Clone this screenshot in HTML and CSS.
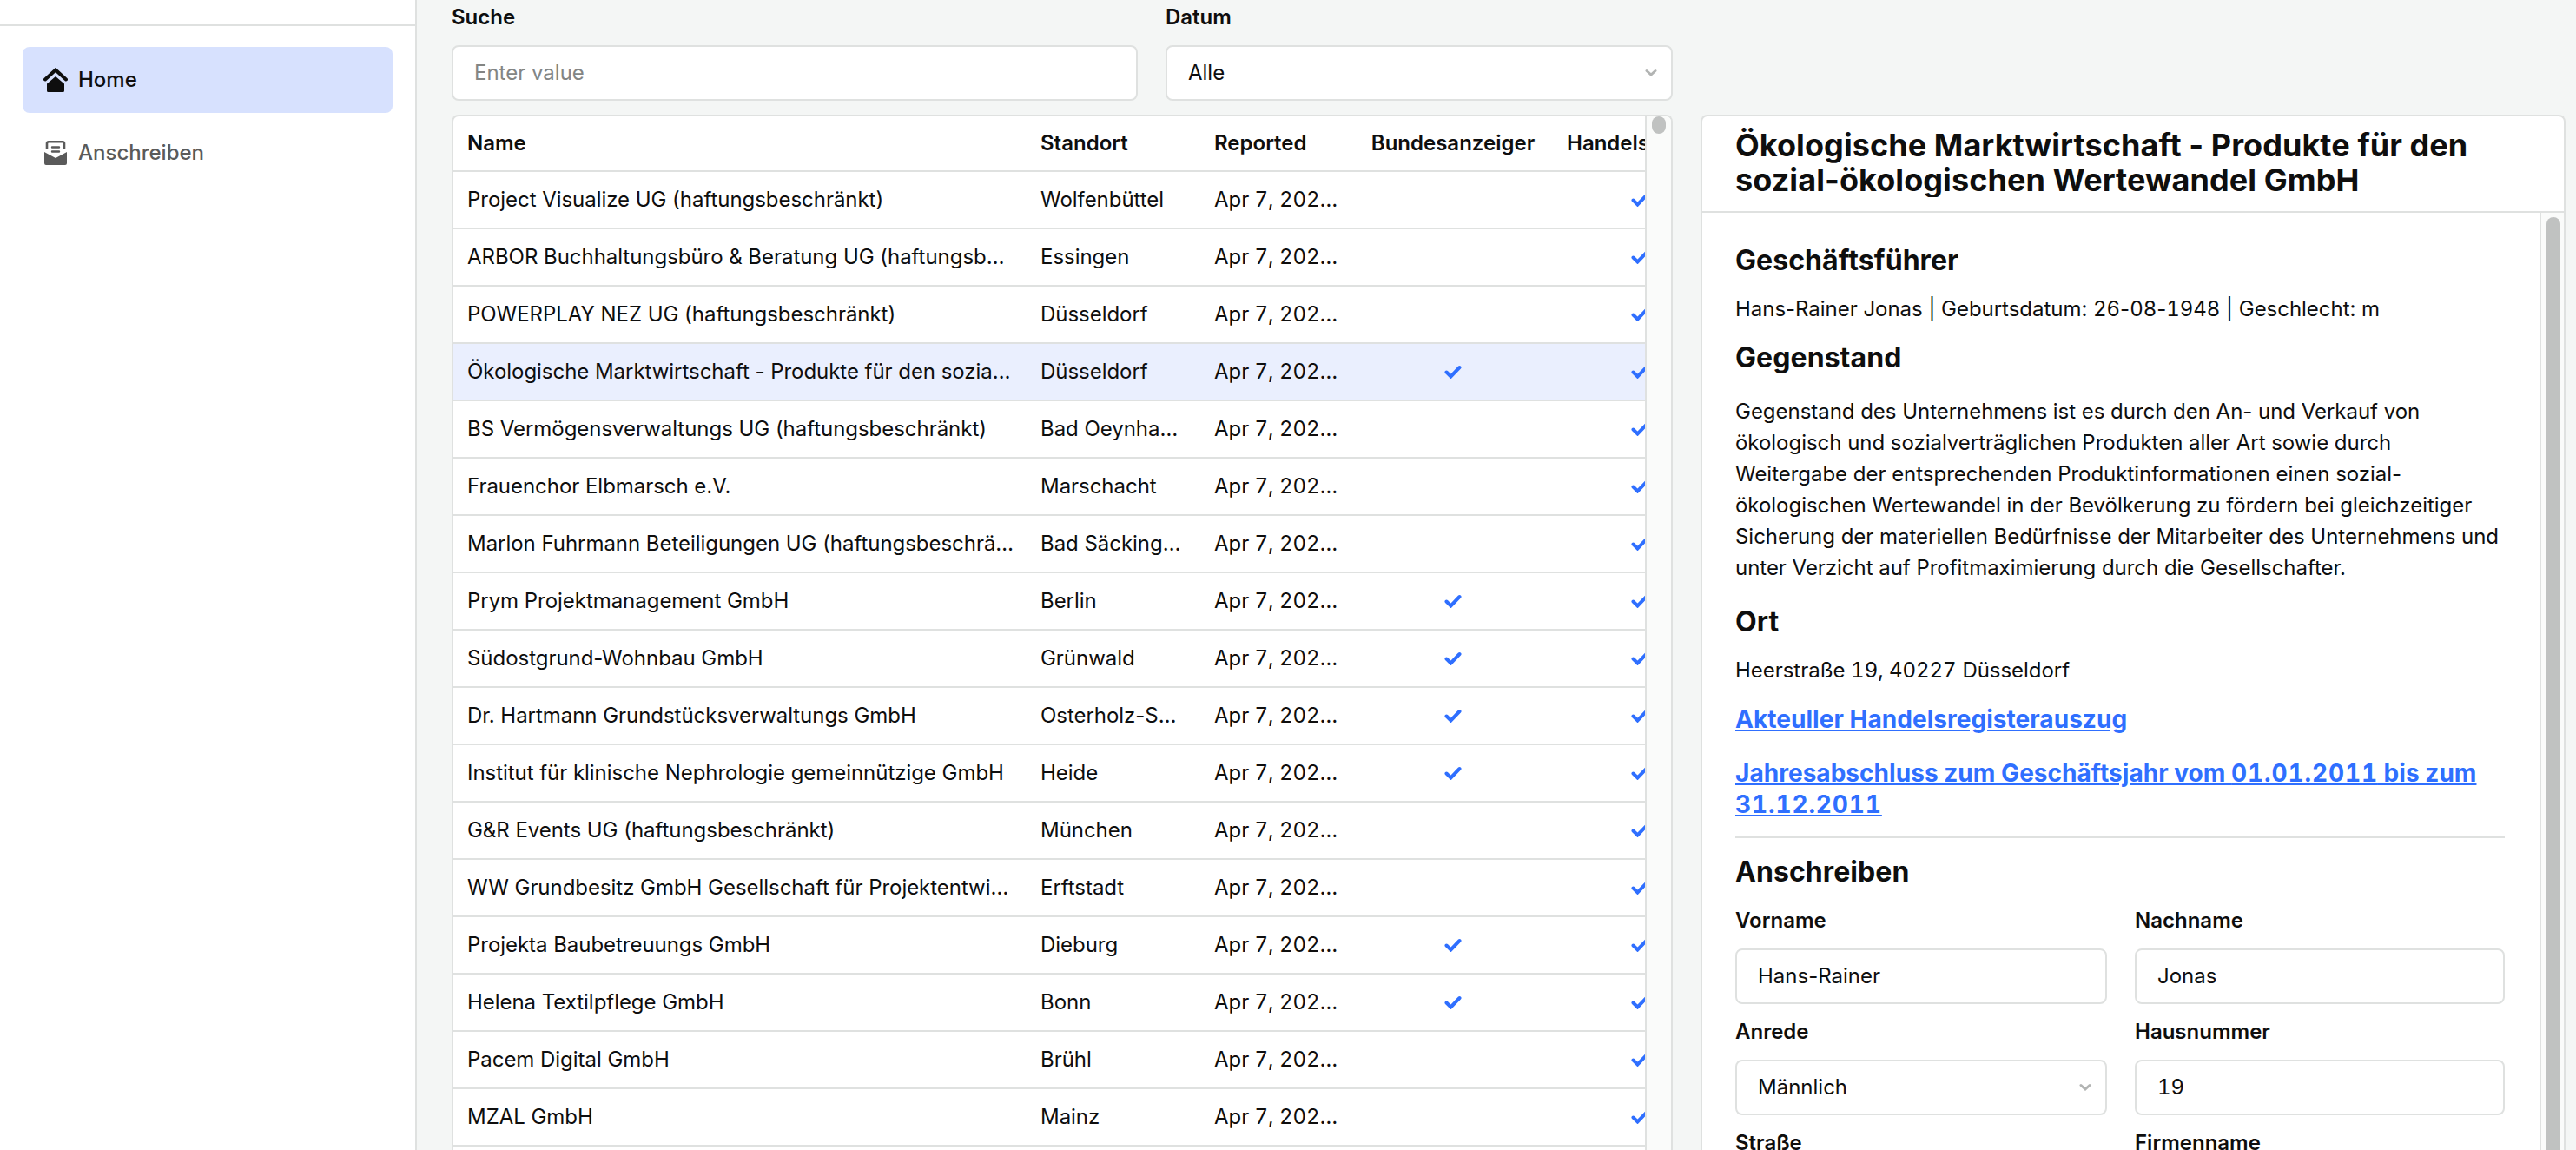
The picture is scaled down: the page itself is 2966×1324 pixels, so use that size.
FILE: index.html
```html
<!DOCTYPE html>
<html lang="de">
<head>
    <meta charset="UTF-8">
    <meta name="viewport" content="width=device-width, initial-scale=1.0">
    <title>Home</title>
    <link rel="stylesheet" href="styles.css">
</head>
<body>
    <aside class="sidebar">
        <div class="sidebar-top"></div>
        <nav>
            <a class="nav-item active">
                <svg class="nav-icon" viewBox="0 0 28 28"><path d="M2 13.5L14 2.500l12 11" fill="none" stroke="currentColor" stroke-width="4" stroke-linecap="round"/><path d="M14 10l10 8.500V26.500a1.500 1.500 0 0 1-1.500 1.500H5.500A1.500 1.500 0 0 1 4 26.500v-8z" fill="currentColor"/></svg>
                Home
            </a>
            <a class="nav-item">
                <svg class="nav-icon" viewBox="0 0 28 28"><path d="M4 10V3a2 2 0 0 1 2-1.700h16A2 2 0 0 1 24 3v7" fill="none" stroke="currentColor" stroke-width="2.600"/><path d="M10 7.500h8M10 12.500h8" stroke="currentColor" stroke-width="2.400" stroke-linecap="round"/><path d="M1 13l13 7 13-7v13a2 2 0 0 1-2 2H3a2 2 0 0 1-2-2z" fill="currentColor"/></svg>
                Anschreiben
            </a>
        </nav>
    </aside>

    <main>
        <section class="list">
            <div class="filters">
                <div class="field">
                    <label>Suche</label>
                    <input type="text" placeholder="Enter value">
                </div>
                <div class="field">
                    <label>Datum</label>
                    <div class="select">Alle <svg class="chevron" viewBox="0 0 14 10"><path d="M2 2.500l5 4.500 5-4.500"/></svg></div>
                </div>
            </div>
            <div class="table-box">
                <div class="table-scroll">
                    <table>
                        <colgroup>
                            <col class="col-name"><col class="col-city"><col class="col-date"><col class="col-bund"><col class="col-hand">
                        </colgroup>
                        <thead>
                            <tr><th>Name</th><th>Standort</th><th>Reported</th><th class="center">Bundesanzeiger</th><th>Handelsregister</th></tr>
                        </thead>
                        <tbody id="rows"></tbody>
                    </table>
                </div>
                <div class="table-bar"><div class="thumb"></div></div>
            </div>
        </section>

        <section class="detail">
            <header class="detail-header">
                <h1>Ökologische Marktwirtschaft - Produkte für den sozial-ökologischen Wertewandel GmbH</h1>
            </header>
            <div class="detail-body">
                <div class="detail-content">
                    <h2>Geschäftsführer</h2>
                    <p>Hans-Rainer Jonas | Geburtsdatum: <span class="num">26</span>-<span class="num">08</span>-<span class="num">1948</span> | Geschlecht: m</p>
                    <h2>Gegenstand</h2>
                    <p class="purpose">Gegenstand des Unternehmens ist es durch den An- und Verkauf von ökologisch und sozialverträglichen Produkten aller Art sowie durch Weitergabe der entsprechenden Produktinformationen einen sozial-ökologischen Wertewandel in der Bevölkerung zu fördern bei gleichzeitiger Sicherung der materiellen Bedürfnisse der Mitarbeiter des Unternehmens und unter Verzicht auf Profitmaximierung durch die Gesellschafter.</p>
                    <h2>Ort</h2>
                    <p>Heerstraße <span class="num">19, 40227</span> Düsseldorf</p>
                    <a class="doc-link">Akteuller Handelsregisterauszug</a>
                    <a class="doc-link">Jahresabschluss zum Geschäftsjahr vom <span class="num">01.01.2011</span> bis zum <span class="num">31.12.2011</span></a>
                    <hr>
                    <h2>Anschreiben</h2>
                    <div class="form">
                        <div class="field"><label>Vorname</label><input type="text" value="Hans-Rainer"></div>
                        <div class="field"><label>Nachname</label><input type="text" value="Jonas"></div>
                        <div class="field"><label>Anrede</label><div class="select">Männlich <svg class="chevron" viewBox="0 0 14 10"><path d="M2 2.500l5 4.500 5-4.500"/></svg></div></div>
                        <div class="field"><label>Hausnummer</label><input class="num" type="text" value="19"></div>
                        <div class="field"><label>Straße</label></div>
                        <div class="field"><label>Firmenname</label></div>
                    </div>
                </div>
                <div class="detail-bar"><div class="thumb"></div></div>
            </div>
        </section>
    </main>
    <script src="script.js"></script>
</body>
</html>
```
FILE: styles.css
```css
* {
    box-sizing: border-box;
}
html {
    overflow: hidden;
}
body {
    margin: 0;
    height: 1324px;
    display: flex;
    overflow: hidden;
    background: #f4f6f5;
    color: #0e0e0e;
    font-family: Inter, sans-serif;
    font-size: 24px;
    line-height: 36px;
}

/* sidebar */
.sidebar {
    width: 480px;
    flex: none;
    background: #fff;
    border-right: 2px solid #dfe1e0;
}
.sidebar-top {
    height: 30px;
    border-bottom: 2px solid #dfe1e0;
}
nav {
    display: flex;
    flex-direction: column;
    gap: 8px;
    padding: 24px 26px;
}
.nav-item {
    display: flex;
    align-items: center;
    gap: 12px;
    height: 76px;
    padding: 0 24px;
    border-radius: 8px;
    color: #5a5a5a;
    font-weight: 500;
}
.nav-item.active {
    background: #d7e1fe;
    color: #0e0e0e;
}
.nav-icon {
    width: 28px;
    height: 28px;
}

/* search + table */
main {
    display: flex;
    gap: 32px;
    height: 1324px;
    padding-left: 40px;
    overflow: hidden;
}
.list {
    width: 1406px;
    display: flex;
    flex-direction: column;
    gap: 16px;
}
.filters {
    display: grid;
    grid-template-columns: 790px 584px;
    gap: 32px;
}
.field {
    display: flex;
    flex-direction: column;
}
.filters .field {
    height: 116px;
}
label {
    font-weight: 600;
    height: 52px;
    padding-top: 2px;
    flex: none;
}
input, .select {
    width: 100%;
    height: 64px;
    padding: 0 24px;
    border: 2px solid #dfe1e0;
    border-radius: 8px;
    background: #fff;
    color: #0e0e0e;
    font: inherit;
}
input {
    padding-bottom: 2px;
}
input::placeholder {
    color: #838584;
}
.select {
    display: flex;
    align-items: center;
    justify-content: space-between;
    padding-right: 16px;
}
.chevron {
    width: 14px;
    height: 10px;
    fill: none;
    stroke: #b2b4b3;
    stroke-width: 3;
    stroke-linecap: round;
}
.num {
    font-variant-numeric: tabular-nums;
}
.table-box {
    display: flex;
    flex: 1;
    min-height: 0;
    border: 2px solid #dfe1e0;
    border-bottom: 0;
    border-radius: 8px 8px 0 0;
    background: #fff;
    overflow: hidden;
}
.table-scroll {
    width: 1372px;
    overflow: hidden;
}
.table-bar {
    width: 30px;
    padding-left: 6px;
    border-left: 2px solid #dfe1e0;
    background: #fafbfa;
}
.thumb {
    width: 16px;
    height: 20px;
    border-radius: 8px;
    background: #c0c2c1;
}
table {
    width: 1466px;
    table-layout: fixed;
    border-spacing: 0;
}
.col-name { width: 660px; }
.col-city { width: 200px; }
.col-date { width: 176px; }
.col-bund { width: 230px; }
.col-hand { width: 200px; }
th, td {
    height: 66px;
    padding: 0 16px;
    border-bottom: 2px solid #dfe1e0;
    overflow: hidden;
    text-align: left;
    text-overflow: ellipsis;
    white-space: nowrap;
}
td {
    letter-spacing: -0.04px;
}
td:first-child {
    padding-right: 14px;
}
th {
    height: 64px;
    font-weight: 600;
}
.center {
    text-align: center;
}
.selected td {
    background: #eaeffe;
}
.check {
    display: block;
    width: 20px;
    height: 16px;
    margin: 0 auto;
    fill: none;
    stroke: #2f6fff;
    stroke-width: 4;
    stroke-linecap: round;
}

/* detail */
.detail {
    display: flex;
    flex-direction: column;
    width: 996px;
    margin-top: 132px;
    border: 2px solid #dfe1e0;
    border-bottom: 0;
    border-radius: 8px 8px 0 0;
    background: #fff;
    overflow: hidden;
}
.detail-header {
    height: 111px;
    flex: none;
    padding: 13px 38px 0;
    border-bottom: 2px solid #dfe1e0;
}
h1 {
    margin: 0;
    overflow: hidden;
    font-size: 36px;
    letter-spacing: 0.07px;
    line-height: 40px;
}
.detail-body {
    display: flex;
    flex: 1;
    min-height: 0;
}
.detail-content {
    width: 964px;
    padding: 35px 38px 0;
    overflow: hidden;
}
h2 {
    margin: 0;
    font-size: 32px;
    letter-spacing: 0.07px;
    line-height: 40px;
}
p {
    margin: 18px 0;
    letter-spacing: -0.03px;
}
.purpose {
    margin: 24px 0;
}
.doc-link {
    display: block;
    margin: 20px 0 26px;
    color: #2f6fff;
    font-size: 28px;
    font-weight: 700;
    letter-spacing: 0.04px;
    line-height: 36px;
    text-decoration: underline;
}
.doc-link .num {
    letter-spacing: 0.9px;
}
hr {
    margin: -7px 2px 19px 0;
    border: 0;
    border-top: 2px solid #dfe1e0;
}
.form {
    display: grid;
    grid-template-columns: 428px 426px;
    gap: 12px 32px;
    margin-top: 16px;
}
.detail-bar {
    width: 28px;
    padding: 5px 0 0 6px;
    border-left: 2px solid #dfe1e0;
    background: #fafbfa;
}
.detail-bar .thumb {
    height: 100%;
    border-radius: 8px 8px 0 0;
}
```
FILE: script.js
```js
// name, location, listed in Bundesanzeiger
const companies = [
    ["Project Visualize UG (haftungsbeschränkt)", "Wolfenbüttel", false],
    ["ARBOR Buchhaltungsbüro & Beratung UG (haftungsbeschränkt)", "Essingen", false],
    ["POWERPLAY NEZ UG (haftungsbeschränkt)", "Düsseldorf", false],
    ["Ökologische Marktwirtschaft - Produkte für den sozial-ökologischen Wertewandel GmbH", "Düsseldorf", true],
    ["BS Vermögensverwaltungs UG (haftungsbeschränkt)", "Bad Oeynhausen", false],
    ["Frauenchor Elbmarsch e.V.", "Marschacht", false],
    ["Marlon Fuhrmann Beteiligungen UG (haftungsbeschränkt)", "Bad Säckingen", false],
    ["Prym Projektmanagement GmbH", "Berlin", true],
    ["Südostgrund-Wohnbau GmbH", "Grünwald", true],
    ["Dr. Hartmann Grundstücksverwaltungs GmbH", "Osterholz-Scharmbeck", true],
    ["Institut für klinische Nephrologie gemeinnützige GmbH", "Heide", true],
    ["G&R Events UG (haftungsbeschränkt)", "München", false],
    ["WW Grundbesitz GmbH Gesellschaft für Projektentwicklung", "Erftstadt", false],
    ["Projekta Baubetreuungs GmbH", "Dieburg", true],
    ["Helena Textilpflege GmbH", "Bonn", true],
    ["Pacem Digital GmbH", "Brühl", false],
    ["MZAL GmbH", "Mainz", false]
];
const selectedRow = 3;
const check = '<svg class="check" viewBox="0 0 20 16"><path d="M2.500 8.500l5 5L17.500 3"/></svg>';

const rows = document.getElementById("rows");
companies.forEach((company, index) => {
    const tr = document.createElement("tr");
    if (index === selectedRow) tr.className = "selected";
    [company[0], company[1], "Apr 7, 2023, 2:00 AM"].forEach((text, column) => {
        const td = document.createElement("td");
        td.textContent = text;
        if (column === 2) td.className = "num";
        tr.appendChild(td);
    });
    // every company has a Handelsregister entry
    [company[2], true].forEach(listed => {
        const td = document.createElement("td");
        td.className = "center";
        if (listed) td.innerHTML = check;
        tr.appendChild(td);
    });
    rows.appendChild(tr);
});
```
